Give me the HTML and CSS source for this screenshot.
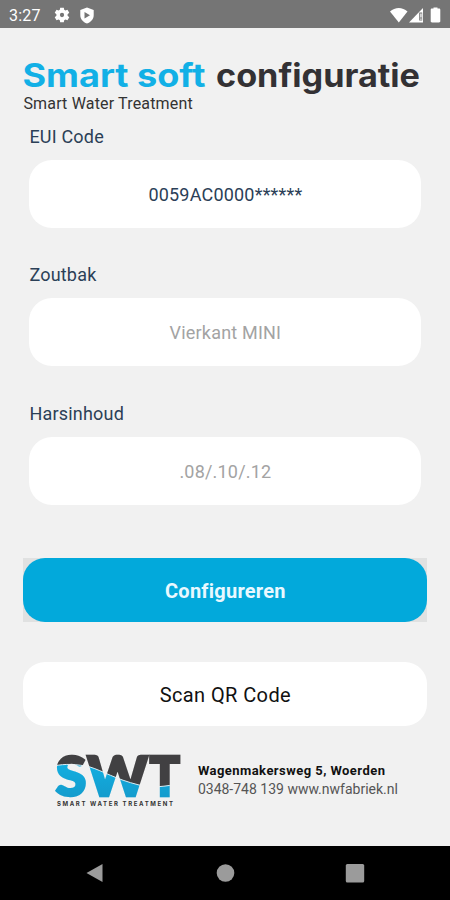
FILE: index.html
```
<!DOCTYPE html>
<html lang="nl">

<head>
  <meta charset="utf-8">
  <title>Smart soft configuratie</title>
  <link rel="stylesheet" href="styles.css">
</head>

<body>
  <div class="statusbar">
    <span class="time">3:27</span>
    <svg class="gear" width="16" height="16" viewBox="0 0 24 24">
      <path fill="#fff" fill-rule="evenodd" d="M9.3 1h5.4l.6 3.2 1.8 1 3.1-1.1 2.7 4.7-2.5 2.1v2.2l2.5 2.1-2.7 4.7-3.1-1.1-1.8 1-.6 3.2H9.3l-.6-3.2-1.8-1-3.1 1.1-2.7-4.7 2.5-2.1v-2.2L1.1 8.8l2.7-4.7 3.1 1.1 1.8-1zM12 8.8a3.2 3.2 0 1 0 0 6.4 3.2 3.2 0 0 0 0-6.4z"/>
    </svg>
    <svg class="shield" width="16" height="17" viewBox="0 0 16 17">
      <path fill="#fff" fill-rule="evenodd" d="M8 .5l6.7 2.6v5.2c0 3.9-2.8 6.9-6.7 8.2-3.9-1.3-6.7-4.3-6.7-8.2V3.1zM5.500 5v6.500L11 8.300z"/>
    </svg>
    <svg class="signals" width="54" height="17" viewBox="0 0 54 17">
      <path fill="#fff" d="M0 4.500C5-.2 12.500-.2 17.500 4.500L8.800 15.500z"/>
      <path fill="#fff" d="M33 1v14.500H19z"/>
      <path fill="#757575" d="M29.200 5.500h3v8h-3z"/>
      <path fill="#fff" d="M30.300 6.500h1.300v4h-1.300zM30.300 11.500h1.300v1.300h-1.300z"/>
      <path fill="#fff" d="M43.500 1.500V.5h4v1h1.500c.8 0 1.300.5 1.300 1.200v11.600c0 .7-.5 1.200-1.300 1.200h-7c-.8 0-1.300-.5-1.300-1.200V2.700c0-.7.500-1.200 1.300-1.200z"/>
    </svg>
  </div>

  <div class="screen">
    <h1>
      <svg class="title" width="404" height="40" viewBox="0 0 404 40">
        <text class="blue" x="-.5" y="31.500" textLength="183" lengthAdjust="spacingAndGlyphs">Smart soft</text>
        <text x="193" y="31.500" textLength="204" lengthAdjust="spacingAndGlyphs">configuratie</text>
      </svg>
    </h1>
    <p class="subtitle">Smart Water Treatment</p>

    <div class="field">
      <label>EUI Code</label>
      <div class="input">0059AC0000******</div>
    </div>
    <div class="field">
      <label>Zoutbak</label>
      <div class="input placeholder">Vierkant MINI</div>
    </div>
    <div class="field">
      <label>Harsinhoud</label>
      <div class="input placeholder">.08/.10/.12</div>
    </div>

    <div class="button-wrap">
      <button class="button primary">Configureren</button>
    </div>
    <button class="button">Scan QR Code</button>

    <div class="footer">
      <svg class="logo" width="128" height="56" viewBox="0 0 128 56">
        <defs>
          <linearGradient id="water" x1="0" y1="0" x2="0" y2="1">
            <stop offset="0" stop-color="#12aee0"/>
            <stop offset="1" stop-color="#1595c6"/>
          </linearGradient>
          <mask id="letters" maskUnits="userSpaceOnUse" x="-2" y="0" width="132" height="56">
            <text class="logo-text" x=".5" y="42.500" textLength="31" lengthAdjust="spacingAndGlyphs">S</text>
            <text class="logo-text" x="32" y="42.500" textLength="61" lengthAdjust="spacingAndGlyphs">W</text>
            <text class="logo-text" x="94.500" y="42.500" textLength="30.500" lengthAdjust="spacingAndGlyphs">T</text>
          </mask>
        </defs>
        <g mask="url(#letters)">
          <rect width="128" height="56" fill="#414042"/>
          <path d="M-1 13C10 10.500 22 11 35 14C48 18 60 26 84 32C98 35 108 34 128 30V56H-1z" fill="url(#water)"/>
          <path d="M-1 13C10 10.500 22 11 35 14C48 18 60 26 84 32C98 35 108 34 128 30" fill="none" stroke="#d9eff7" stroke-width="1"/>
        </g>
        <text class="tagline" x="2" y="52.500" textLength="116">SMART WATER TREATMENT</text>
      </svg>
      <div class="contact">
        <b>Wagenmakersweg 5, Woerden</b>
        <span>0348-748 139 www.nwfabriek.nl</span>
      </div>
    </div>
  </div>

  <div class="navbar">
    <svg width="20" height="20" viewBox="0 0 20 20"><path d="M17.500 1v18L1.500 10z"/></svg>
    <svg width="20" height="20" viewBox="0 0 20 20"><circle cx="10.500" cy="10" r="8.800"/></svg>
    <svg width="20" height="20" viewBox="0 0 20 20"><rect x=".8" y="1" width="18.400" height="18.400" rx="1.500"/></svg>
  </div>
</body>

</html>
```
FILE: styles.css
```
* {
  box-sizing: border-box;
}

body {
  margin: 0;
  height: 900px;
  display: flex;
  flex-direction: column;
  background: #f1f1f1;
  font-family: Roboto, sans-serif;
  overflow: hidden;
}

svg {
  display: block;
}

.statusbar {
  height: 28px;
  flex: none;
  display: flex;
  align-items: center;
  padding: 2px 6px 0 9px;
  background: #757575;
  color: #fff;
}

.time {
  width: 45px;
  font-size: 16px;
  letter-spacing: .2px;
}

.shield {
  margin-left: 9px;
}

.signals {
  margin-left: auto;
}

.screen {
  flex: 1;
  padding: 27px 22.6px 0 23.4px;
}

h1 {
  margin: 0;
}

.title {
  font: 700 32px Inter, sans-serif;
  fill: #333134;
}

.title .blue {
  fill: #12b0e6;
}

.subtitle {
  margin: 0;
  height: 30.6px;
  line-height: 18px;
  font-size: 16px;
  letter-spacing: .17px;
  color: #333;
}

.field {
  height: 138.9px;
  padding: 0 6px;
  color: #2b4057;
  font-size: 18px;
  letter-spacing: .2px;
}

.field label {
  display: block;
  height: 34px;
  line-height: 22.4px;
}

.input {
  height: 68px;
  border-radius: 23px;
  background: #fff;
  line-height: 70.4px;
  text-align: center;
}

.placeholder {
  color: #a3a3a3;
}

.button-wrap {
  margin: 15.3px 0 40px;
  background: #e0e1e1;
}

.button {
  display: block;
  width: 404px;
  height: 64px;
  padding: 2px 0 0;
  border: 0;
  border-radius: 22px;
  background: #fff;
  color: #111;
  font: 20px Roboto, sans-serif;
  letter-spacing: .4px;
}

.primary {
  background: #02a9db;
  color: #e8f8ff;
  font-weight: 700;
  letter-spacing: .25px;
}

.footer {
  display: flex;
  padding: 27.5px 0 0 31.5px;
}

.logo-text {
  font: 900 55px Lato, sans-serif;
  fill: #fff;
  stroke: #fff;
  stroke-width: 2.4px;
}

.tagline {
  font: 700 6px Inter, sans-serif;
  fill: #333;
}

.contact {
  display: flex;
  flex-direction: column;
  padding: 9px 0 0 15px;
  font-size: 14px;
  line-height: 18px;
  color: #555;
  white-space: nowrap;
}

.contact b {
  font-size: 13px;
  letter-spacing: .45px;
  color: #111;
}

.navbar {
  height: 54px;
  flex: none;
  display: flex;
  justify-content: space-between;
  align-items: center;
  padding: 0 85px;
  background: #000;
}

.navbar svg {
  fill: #9b9b9b;
}
```
